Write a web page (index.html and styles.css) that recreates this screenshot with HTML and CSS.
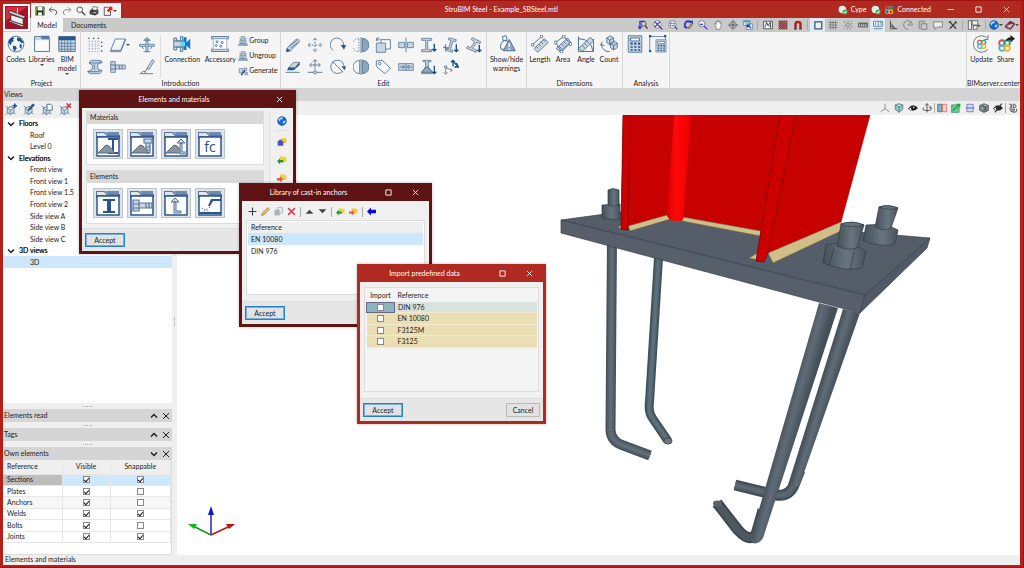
FILE: index.html
```html
<!DOCTYPE html>
<html lang="en">
<head>
<meta charset="utf-8">
<title>StruBIM Steel - Example_SBSteel.mtl</title>
<link rel="stylesheet" href="styles.css">
</head>
<body>
<svg class="defs" aria-hidden="true">
  <defs>
    <symbol id="save" viewBox="0 0 16 16"><path class="ink" d="M1 1h14v14H1z"/><path fill="#efe" d="M4 1h8v6H4zM5 10h6v5H5z"/><path fill="#6b9a28" d="M1 1h2v14H1zM13 2h2v13h-2z"/></symbol>
    <symbol id="undo" viewBox="0 0 16 16"><path class="k" d="M6 2L2 6l4 4M2 6h8q5 1 4 6l-3 2"/></symbol>
    <symbol id="redo" viewBox="0 0 16 16"><path class="g" d="M10 2l4 4-4 4M14 6H6q-5 1-4 6l3 2"/></symbol>
    <symbol id="search" viewBox="0 0 16 16"><circle class="k" cx="6" cy="6" r="4.5"/><path class="k w2" d="M9.500 9.500L15 15"/></symbol>
    <symbol id="print" viewBox="0 0 16 16"><path fill="#444" d="M1 8l4-4 10 2v6l-5 3-9-2z"/><path fill="#fff" stroke="#333" d="M5 6l2-5 7 1-2 5zM3 10l7 2 3-2"/></symbol>
    <symbol id="export" viewBox="0 0 16 16"><path class="k" d="M8 2H2v13h10V8"/><path fill="#f01818" d="M8 1h7v7l-2-2-4 4-3-3 4-4z"/></symbol>
    <symbol id="globe" viewBox="0 0 24 24"><circle cx="12" cy="12" r="10.500" fill="#f2f7fb" stroke="#28588b"/><path fill="#205389" d="M3 6l4-3 3 1-2 2 1 2-3 2-1 4-3-4zM14 3l4 1 4 6-3 1-2-3-2 1-2-3zM8 14l4 1 1 3-3 4-2-4zM17 12l3 1-1 5-2-1z"/></symbol>
    <symbol id="folder" viewBox="0 0 24 24"><path class="lb" d="M2 2h8l2 3h10v17H2z"/><path class="bf" d="M10 1h12v4H12z"/><path class="wf" d="M3 7h18v14H3z"/></symbol>
    <symbol id="tablegrid" viewBox="0 0 24 24"><path class="lb" d="M1 2h22v20H1z"/><path class="df" d="M1 2h22v5H1z"/><path class="b thin" d="M1 11h22M1 15h22M1 19h22M5 7v15M9 7v15M13 7v15M17 7v15"/></symbol>
    <symbol id="dots" viewBox="0 0 24 24"><path fill="none" stroke="#8ba0b6" stroke-dasharray="2 2" d="M3 7h15M3 12h15M3 17h15M3 22h15M3 5v17M8 5v17M13 5v17M18 5v17"/><path class="df" d="M2 1h2v2H2zM9 1h2v2H9zM16 1h2v2h-2zM21 7h2v2h-2zM21 13h2v2h-2zM21 20h2v2h-2z"/></symbol>
    <symbol id="plane" viewBox="0 0 24 24"><path class="b wf" d="M8 3h15l-7 17H1zM1 20v2h15l7-17V3"/></symbol>
    <symbol id="anchor" viewBox="0 0 24 24"><path class="b lb" d="M1 11h22v3H1z"/><path class="lb" d="M10.500 4h3v18h-3zM7 5l5-4 5 4z"/><path class="b" d="M4 14l3 4M20 14l-3 4M7 22h10"/></symbol>
    <symbol id="beam" viewBox="0 0 24 24"><path class="lb" d="M6 2h14l3 3-7 3v7l7 3-4 4H4l-3-3 7-4V9L3 6z"/><path class="b" d="M3 6h13l6-2M1 19h15l6-2M11 8v8"/></symbol>
    <symbol id="bolt" viewBox="0 0 24 24"><path class="lb" d="M1 4h7v16H1zM8 9h15v6H8z"/><path class="b" d="M1 9h7M1 15h7M14 9v6M18 9v6"/></symbol>
    <symbol id="weld" viewBox="0 0 24 24"><path class="lb" d="M12 14l8-13 3 2-8 13z"/><path class="b" d="M12 14l-3 6M1 22h20M3 21q5-5 7 0"/></symbol>
    <symbol id="connection" viewBox="0 0 24 24"><path class="lb" d="M1 4h4v4h5V2h3v20h-3v-6H5v4H1z"/><path fill="#1478ca" d="M14 3h4v7l5-5v14l-5-5v6h-4z"/><path fill="#5be0ed" d="M10 9h6v6h-6z"/><path class="b" d="M1 8h13M1 16h13"/></symbol>
    <symbol id="accessory" viewBox="0 0 24 24"><path class="lb" d="M0 2h24v3H0zM0 19h24v3H0z"/><path class="wf" stroke="#8ca1b7" d="M3 5h18v14H3z"/><g class="b"><circle cx="8" cy="9" r="1.300"/><circle cx="15" cy="10" r="1.300"/><circle cx="7" cy="14" r="1.300"/><circle cx="13" cy="15" r="1.300"/></g></symbol>
    <symbol id="group" viewBox="0 0 16 16"><path class="b thin lb" d="M5 1h6v4H5zM3 7h10v5H3zM1 13h4v2H1zM6 13h4v2H6zM11 13h4v2h-4z"/><path class="b thin" d="M2 3l3 4M14 3l-3 4M6 8v4M9 8v4"/></symbol>
    <symbol id="generate" viewBox="0 0 16 16"><path class="b thin lb" d="M2 4h6v7H2zM10 3h4v4h-4zM11 10h4v4h-4z"/><path class="df" d="M4 14l6-8 2 2-6 7z"/></symbol>
    <symbol id="pencil" viewBox="0 0 24 24"><path class="lb" d="M3 17L17 3q4 0 5 4L8 21l-6 1z"/><path class="b" d="M6 14L18 5M8 17L20 8M3 17l5 4"/><path class="df" d="M2 22l1-5 4 4z"/></symbol>
    <symbol id="eraser" viewBox="0 0 24 24"><path class="lb" d="M5 13l8-8h9l-7 8z"/><path class="df" d="M5 13h10l-2 4H3zM15 13l7-8v4l-9 8z"/><path class="b" d="M1 20h21"/></symbol>
    <symbol id="move" viewBox="0 0 24 24"><path class="b" stroke-dasharray="3 2" d="M12 2v20M2 12h20"/><path class="b" d="M9 5l3-3 3 3M9 19l3 3 3-3M5 9l-3 3 3 3M19 9l3 3-3 3"/></symbol>
    <symbol id="moveline" viewBox="0 0 24 24"><path class="b" d="M12 1v15M5 9h14M9 4l3-3 3 3M7 6L4 9l3 3M17 6l3 3-3 3M1 20h22"/><circle class="lb" cx="12" cy="20" r="2.500"/></symbol>
    <symbol id="rotate" viewBox="0 0 24 24"><path class="b" d="M5 20A10 10 0 1 1 20 14"/><path class="df" d="M16 12h8l-3 7z"/></symbol>
    <symbol id="rotateline" viewBox="0 0 24 24"><path class="b" d="M21 10A10 10 0 1 0 18 19M4 4l16 16"/><path class="df" d="M17 11h7l-2 6z"/></symbol>
    <symbol id="mirror" viewBox="0 0 24 24"><path class="b" d="M9 2A10 10 0 0 0 9 22z" stroke-dasharray="2 2"/><path class="mid-blue" d="M14 2a10 10 0 0 1 0 20z"/><path class="b" d="M12 0v24"/></symbol>
    <symbol id="symmetry" viewBox="0 0 24 24"><path class="b" d="M10 2A10 10 0 0 0 10 22z"/><path class="mid-blue" d="M14 2a10 10 0 0 1 0 20z"/><path class="b" d="M12 0v24"/></symbol>
    <symbol id="copy" viewBox="0 0 24 24"><path class="b wf" d="M9 4h14v14H9z"/><path class="lb" d="M2 9h14v14H2z"/><path class="b" d="M2 6V3h6M5 0L2 3l3 3"/></symbol>
    <symbol id="tag" viewBox="0 0 24 24"><path class="b wf" d="M2 3l9-1 12 12-8 8L2 11z"/><circle class="b" cx="7" cy="7" r="2"/></symbol>
    <symbol id="split" viewBox="0 0 24 24"><path class="lb" d="M1 8h9v8H1zM14 8h9v8h-9z"/><path class="b" d="M12 1v22"/></symbol>
    <symbol id="join" viewBox="0 0 24 24"><path class="lb" d="M1 7h22v10H1z"/><path class="b" d="M12 7v10M3 12h7M7 9l3 3-3 3M21 12h-7M17 9l-3 3 3 3"/></symbol>
    <symbol id="column" viewBox="0 0 24 24"><path class="lb" d="M1 2h15v3h-6v14h6v3H1v-3h6V5H1z"/><path class="db" d="M20 10v11M17 18l3 3 3-3"/></symbol>
    <symbol id="columnrot" viewBox="0 0 24 24"><path class="lb" d="M9 1l11 3-1 3-4-1-4 13 4 1-1 3-9-3 1-3 2 1 4-13-4-1z"/><path class="b" d="M4 11v11M0 16h8M2 13l4 6"/><path class="db" d="M20 11v11M17 19l3 3 3-3"/></symbol>
    <symbol id="columntilt" viewBox="0 0 24 24"><path class="lb" d="M9 1l13 6-1 3-5-2-6 9 6 3-1 3L1 17l1-3 5 2 6-9-5-3z"/><path class="db" d="M20 12v10M17 19l3 3 3-3"/></symbol>
    <symbol id="footing" viewBox="0 0 24 24"><path class="lb" d="M3 2h12v2h-4v8l6 8v2H1v-2l6-8V4H3z"/><path class="mid-blue" d="M7 12h4l6 8H1z"/><path class="db" d="M20 10v12M17 19l3 3 3-3"/></symbol>
    <symbol id="nodes" viewBox="0 0 24 24"><path class="g" d="M4 22v-9l9 4M1 20l3 3 3-3M11 14l3 3-3 2"/><path class="db" d="M15 11V3l7 8M12 5l3-3 3 3M20 6l3 6h-6"/><circle class="lb" cx="4" cy="12" r="2"/></symbol>
    <symbol id="warnings" viewBox="0 0 24 24"><path class="b wf" d="M5 10q-3 4-1 9h6l4-7q0-5-5-5zM6 2l5-1 1 6-5 1z"/><path class="mid-blue" d="M7 21l8-15 8 15z"/><path stroke="#fff" stroke-width="2" d="M15 11v5M15 18v2"/></symbol>
    <symbol id="length" viewBox="0 0 24 24"><path class="lb" d="M4 18L18 5l5 5L9 23z"/><path class="b" d="M2 13L14 2M7 15l3 3M10 12l3 3M13 9l3 3M16 6l3 3"/><circle class="b wf" cx="2" cy="13" r="1.800"/><circle class="b wf" cx="14" cy="2" r="1.800"/></symbol>
    <symbol id="area" viewBox="0 0 24 24"><path class="lb" d="M3 18L18 4l4 5L8 22z"/><path class="b" d="M2 10L13 2l9 9L10 22zM7 15l3 3M10 12l3 3M13 9l3 3M16 6l3 3"/><circle class="b wf" cx="2" cy="10" r="2"/><circle class="b wf" cx="13" cy="2" r="2"/><circle class="b wf" cx="22" cy="12" r="2"/><circle class="b wf" cx="10" cy="22" r="2"/></symbol>
    <symbol id="angle" viewBox="0 0 24 24"><path class="b" d="M2 2v20h20V5M2 5q17 0 19 16"/><path class="lb" d="M2 18L18 3l4 5L7 22z"/><path class="b" d="M7 14l3 3M10 11l3 3M13 8l3 3"/></symbol>
    <symbol id="count" viewBox="0 0 24 24"><path class="lb" d="M9 4l5-3 4 3v6l-5 3-4-3zM14 11l5-3 4 3v6l-5 3-4-3z"/><path class="b" d="M1 12q4 12 12 10M3 9l-2 4 5 1M9 4l4 3 5-3M13 7v6M14 11l4 3 5-3M18 14v6"/></symbol>
    <symbol id="calc" viewBox="0 0 24 24"><path class="lb" d="M3 1h18v22H3z"/><path class="b wf" d="M6 4h12v4H6z"/><path class="df" d="M6 10h3v3H6zM11 10h3v3h-3zM16 10h3v3h-3zM6 15h3v2H6zM11 15h3v2h-3zM16 15h3v2h-3zM6 19h3v2H6zM11 19h3v2h-3zM16 19h3v2h-3z"/></symbol>
    <symbol id="bim" viewBox="0 0 24 24"><g fill="none" stroke-width="3"><circle cx="8" cy="8" r="4.500" stroke="#ef493c"/><circle cx="16" cy="8" r="4.500" stroke="#22a98d"/><circle cx="8" cy="16" r="4.500" stroke="#3bb8ed"/><circle cx="16" cy="16" r="4.500" stroke="#edb62b"/></g></symbol>
    <symbol id="update" viewBox="0 0 24 24"><use href="#bim" x="4" y="5" width="15" height="15"/><path class="g" d="M20 19A11 11 0 1 1 19 4M20 0v6h-5"/></symbol>
    <symbol id="share" viewBox="0 0 24 24"><use href="#bim" x="0" y="4" width="20" height="20"/><path class="ink" d="M12 8q1-5 6-5V0l6 5-6 5V7q-4 0-6 1z"/></symbol>
    <symbol id="zoomback" viewBox="0 0 16 16"><circle class="k" cx="9" cy="6" r="4"/><path class="k w2" d="M12 9l3 5"/><path fill="none" stroke="#2838d0" stroke-width="2" d="M11 2H3v11M0 10l3 4 3-4"/></symbol>
    <symbol id="zoomall" viewBox="0 0 16 16"><circle fill="#fff" stroke="#555" cx="7" cy="7" r="6"/><path fill="none" stroke="#3032c0" stroke-width="2" d="M3 3l8 8M11 3l-8 8M11 11l4 4"/></symbol>
    <symbol id="zoomwin" viewBox="0 0 16 16"><circle fill="#fff" stroke="#555" cx="7" cy="7" r="6"/><path fill="none" stroke="#5058c0" stroke-width="2" stroke-dasharray="2 1" d="M4 5h6v4H4z"/><path class="k w2" d="M11 11l4 4"/></symbol>
    <symbol id="redraw" viewBox="0 0 16 16"><path fill="none" stroke="#2b36cf" stroke-width="3" d="M13 4Q6-1 3 6v5l4 2"/><path fill="#2838d0" d="M10 1h6v6z"/><path fill="#dd9827" stroke="#555" d="M8 13l5-7 2 2-5 6z"/></symbol>
    <symbol id="zoomout" viewBox="0 0 16 16"><circle fill="#edf0ff" stroke="#555" cx="6" cy="6" r="5"/><path fill="none" stroke="#4040d0" stroke-width="2" d="M3 7h5M10 10l5 5"/></symbol>
    <symbol id="hand" viewBox="0 0 16 16"><path class="g wf" d="M4 9L2 6l2-1 1 2V2l2 1V1h2v2l2-1v3l2-1v7l-3 4H6z"/></symbol>
    <symbol id="orbit" viewBox="0 0 16 16"><path class="k" d="M6 3l2-2 2 2M6 13l2 2 2-2M3 6L1 8l2 2M13 6l2 2-2 2M8 4v8M4 8h8"/><circle class="g" cx="8" cy="8" r="5"/></symbol>
    <symbol id="windows" viewBox="0 0 16 16"><path fill="#def5f5" stroke="#41709a" d="M1 1h10v8H1zM5 6h10v9H5z"/><path fill="#49aab5" d="M1 1h10v3H1z"/><path fill="none" stroke="#2530bd" stroke-width="2" d="M7 8l6 5M7 12V8h4"/></symbol>
    <symbol id="raster" viewBox="0 0 16 16"><path class="k wf" d="M1 2h14v12H1z"/><path class="k" d="M3 12l3-8 2 5 4-6v9M4 4l9 8"/></symbol>
    <symbol id="redgrid" viewBox="0 0 16 16"><path fill="#812b31" d="M1 1h14v14H1z"/><path stroke="#ddb9b9" stroke-dasharray="2 2" d="M1 4h14M1 8h14M1 12h14M4 1v14M8 1v14M12 1v14"/></symbol>
    <symbol id="magnet" viewBox="0 0 16 16"><path fill="none" stroke="#b5201c" stroke-width="4" d="M4 13V7q0-4 4-4t4 4v6"/><path stroke="#222" stroke-width="2" d="M2 14h4M10 14h4"/></symbol>
    <symbol id="square" viewBox="0 0 16 16"><path fill="#eee" stroke="#3d566d" stroke-width="2" d="M3 3h11v11H3z"/></symbol>
    <symbol id="hash" viewBox="0 0 16 16"><path class="g" d="M4 1v14M8 1v14M12 1v14M1 4h14M1 8h14M1 12h14"/></symbol>
    <symbol id="snap" viewBox="0 0 16 16"><path class="g" stroke-dasharray="2 3" d="M2 2h12v12H2z"/><circle class="g" cx="8" cy="8" r="3"/></symbol>
    <symbol id="ruler" viewBox="0 0 16 16"><path class="k" d="M1 5h14v6H1zM4 5v4M7 5v4M10 5v4M13 5v4"/></symbol>
    <symbol id="coords" viewBox="0 0 16 16"><path class="b wf" d="M1 2h14v8H1z"/><path class="b" d="M4 4v4M7 4h2v4H7M11 4h2v4M1 14h14"/></symbol>
    <symbol id="perp" viewBox="0 0 16 16"><path class="k" d="M4 1v13h11M4 5l8 9M4 10h4v4"/></symbol>
    <symbol id="polar" viewBox="0 0 16 16"><path class="g" d="M8 8h7A7 7 0 1 0 8 15M8 8l5-5"/></symbol>
    <symbol id="pages" viewBox="0 0 16 16"><path class="g" d="M2 14V2h8v3M5 6h9v9H5z"/></symbol>
    <symbol id="comment" viewBox="0 0 16 16"><path fill="#eee" stroke="#555" d="M1 3h14v8H7l-4 4v-4H1z"/></symbol>
    <symbol id="tools" viewBox="0 0 16 16"><path class="k w2" d="M3 3l10 11M13 3L3 14M1 4l4-2M11 2l3 3"/></symbol>
    <symbol id="layout" viewBox="0 0 20 16"><path fill="#eee" stroke="#333" d="M1 1h5v14H1zM7 1h9v7H7zM9 9h6v6H9z"/><path class="ink" d="M16 8h4l-2 3z"/></symbol>
    <symbol id="world" viewBox="0 0 16 16"><circle cx="8" cy="8" r="7" fill="#176bce" stroke="#0b3d97"/><path fill="#a6e5ff" d="M2 6q2-5 8-4L8 5 5 6l-1 3zM10 8l4-1-2 5-3-1z"/></symbol>
    <symbol id="book" viewBox="0 0 16 16"><path fill="#88273a" stroke="#441320" d="M1 9l7-7 7 3-6 8zM1 9v3l8 3 6-8V5"/><path stroke="#f2dddd" d="M3 11l6 2"/></symbol>
    <symbol id="axes" viewBox="0 0 16 16"><path class="g" d="M8 1v8L1 14M8 9l7 5"/></symbol>
    <symbol id="cube" viewBox="0 0 16 16"><path fill="#8dcbcb" stroke="#3e5966" d="M2 3l6-2 6 2v7l-6 5-6-5zM2 3l6 3 6-3M8 6v9"/></symbol>
    <symbol id="eye" viewBox="0 0 16 16"><path class="ink" d="M0 9q8-10 16-1-7 8-16 1z"/><path fill="#fff" d="M2 9q1-2 3-2-1 2 1 4-3 0-4-2zM8 6h2v2H8z"/></symbol>
    <symbol id="eyeoff" viewBox="0 0 16 16"><path class="ink" d="M0 9q8-10 16-1-7 8-16 1z"/><path fill="#fff" d="M2 9q1-2 3-2-1 2 1 4-3 0-4-2z"/><path class="k w2" d="M3 15L14 1"/></symbol>
    <symbol id="orbitaxis" viewBox="0 0 16 16"><path class="k" d="M8 1v14M5 4l3-3 3 3M3 7q-5 5 5 5t5-5M11 7l3-1 1 3"/></symbol>
    <symbol id="section" viewBox="0 0 16 16"><path fill="#79b5bc" stroke="#33505c" d="M1 2h7v12H1z"/><path fill="#ffd6d6" stroke="#dd3434" d="M9 2h6v12H9z"/></symbol>
    <symbol id="greenplane" viewBox="0 0 16 16"><path fill="#6bc995" stroke="#28775f" d="M1 3h12v12H1z"/><path fill="none" stroke="#15ac35" stroke-width="2" d="M3 12L14 2M9 2h5v5"/></symbol>
    <symbol id="slab" viewBox="0 0 16 16"><path fill="#dadcf4" stroke="#4e579a" d="M3 2h10v12H3z"/><path fill="#7179d0" d="M1 7h14v2H1z"/></symbol>
    <symbol id="solid" viewBox="0 0 16 16"><path fill="#8b9c9c" stroke="#303b3e" d="M1 4l7-3 7 3v8l-7 3-7-3zM1 4l7 3 7-3M8 7v8M4 3l7 3v8M1 8l7 3 7-3"/></symbol>
    <symbol id="threed" viewBox="0 0 16 16"><path class="k" d="M2 2h4v6H2M3 5h3M9 2h2q4 3 0 6H9zM3 10q2 5 7 5t4-6M4 10h6v3H4"/></symbol>
    <symbol id="view" viewBox="0 0 16 16"><path class="b thin lb" d="M3 6l5-2 4 2v6l-5 3-4-3zM3 6l4 3 5-3M7 9v5"/><path class="b thin" d="M1 3l3 3M1 15l3-3M14 14l-3-2"/></symbol>
    <symbol id="viewadd" viewBox="0 0 16 16"><use href="#view"/><path class="db" d="M13 0v6M10 3h6"/></symbol>
    <symbol id="viewedit" viewBox="0 0 16 16"><use href="#view"/><path class="df" d="M6 10l1-3 6-7 3 2-7 7z"/></symbol>
    <symbol id="viewcopy" viewBox="0 0 16 16"><use href="#view"/><path class="b wf" d="M8 1h5l2 2v6H8z"/></symbol>
    <symbol id="viewdel" viewBox="0 0 16 16"><use href="#view"/><path fill="none" stroke="#ee2828" stroke-width="2" d="M10 0l6 6M16 0l-6 6"/></symbol>
    <symbol id="tile" viewBox="0 0 28 28"><path class="bf" d="M2 2h9l3 3h12v4H2z"/><path fill="#7089b0" d="M12 2h13v3H14z"/><path fill="#dfe6ee" d="M3 3h7l3 3H3z"/><path fill="#fff" stroke="#2d578d" stroke-width="1.500" d="M3 7h22v19H3z"/></symbol>
    <symbol id="pile" viewBox="0 0 28 28"><path fill="#87939f" stroke="#58697b" d="M4 23l8-8 3 1 6 7z"/></symbol>
    <symbol id="t-steel" viewBox="0 0 28 28"><use href="#tile"/><path class="df" d="M14 8h10v2h-4v12h4v2H14v-2h4V10h-4z"/><use href="#pile"/></symbol>
    <symbol id="t-boltmat" viewBox="0 0 28 28"><use href="#tile"/><path class="b lb" d="M16 9h8v4h-8zM18 13h4v10h-4zM18 17h4M18 20h4"/><use href="#pile"/></symbol>
    <symbol id="t-ancmat" viewBox="0 0 28 28"><use href="#tile"/><use href="#pile"/><path class="b lb thin" d="M15 13l4-4 4 4zM18 13h2v9h5v2h-7z"/></symbol>
    <symbol id="t-beam" viewBox="0 0 28 28"><use href="#tile"/><path class="df" d="M9 10h12v2h-4v10h4v2H9v-2h4V12H9z"/></symbol>
    <symbol id="t-bolt" viewBox="0 0 28 28"><use href="#tile"/><path class="b lb" d="M5 11h6v11H5zM11 14h13v5H11zM5 15h6M5 19h6M18 14v5M21 14v5"/></symbol>
    <symbol id="t-anchor" viewBox="0 0 28 28"><use href="#tile"/><path class="b lb thin" d="M9 13l4-4 4 4zM12 13h2v9h5v2h-7z"/></symbol>
    <symbol id="t-weld" viewBox="0 0 28 28"><use href="#tile"/><path class="df" d="M12 17l3-7h10v2h-8l-3 5zM3 23h22v2H3z"/><path fill="none" stroke="#304968" stroke-dasharray="1 2" d="M6 19l8 4M8 22l8-5"/></symbol>
    <symbol id="fblue" viewBox="0 0 16 16"><path fill="#edc633" d="M6 2h9v8H6z"/><path fill="#4850c7" d="M1 7l4-3 5 3v7H1z"/></symbol>
    <symbol id="fgreen" viewBox="0 0 16 16"><path fill="#f2d238" d="M5 2h5l1 1h4v8H5z"/><path fill="#2e9430" d="M0 10l5-5v3h5v4H5v3z"/></symbol>
    <symbol id="fred" viewBox="0 0 16 16"><path fill="#f2cd45" d="M5 2h5l1 1h4v8H5z"/><path fill="#ef564b" d="M10 10L5 5v3H0v4h5v3z"/></symbol>
    <symbol id="plus" viewBox="0 0 16 16"><path class="k w2" d="M8 1v14M1 8h14"/></symbol>
    <symbol id="edit" viewBox="0 0 16 16"><path fill="#e8c24b" stroke="#71623a" d="M1 15l1-4L12 1l3 3L5 14z"/></symbol>
    <symbol id="dup" viewBox="0 0 16 16"><path fill="#e8ebec" stroke="#909698" d="M6 1h9v10H6z"/><path fill="#aab0b3" d="M1 5h9v10H1z"/></symbol>
    <symbol id="redx" viewBox="0 0 16 16"><path fill="none" stroke="#df4651" stroke-width="3" d="M2 2l12 12M14 2L2 14"/></symbol>
    <symbol id="up" viewBox="0 0 16 16"><path fill="#444" d="M1 12l7-7 7 7z"/></symbol>
    <symbol id="down" viewBox="0 0 16 16"><path fill="#444" d="M1 4l7 7 7-7z"/></symbol>
    <symbol id="left" viewBox="0 0 16 16"><path fill="#0909e1" d="M0 8l7-7v4h9v6H7v4z"/></symbol>
    <symbol id="x" viewBox="0 0 16 16"><path class="cur" d="M2 2l12 12M14 2L2 14"/></symbol>
    <symbol id="max" viewBox="0 0 16 16"><path class="cur" d="M2 2h12v12H2z"/></symbol>
    <symbol id="min" viewBox="0 0 16 16"><path class="cur" d="M1 8h14"/></symbol>
    <symbol id="chevd" viewBox="0 0 16 16"><path class="cur chev" d="M2 5l6 6 6-6"/></symbol>
    <symbol id="chevu" viewBox="0 0 16 16"><path class="cur chev" d="M2 11l6-6 6 6"/></symbol>
    <symbol id="user" viewBox="0 0 16 16"><circle cx="7" cy="7" r="6" fill="#e5f0e4"/><circle cx="11" cy="11" r="4" fill="#45b45a"/><path fill="none" stroke="#fff" stroke-width="1.500" d="M9 11l2 2 3-4"/></symbol>
    <linearGradient id="stripe"><stop stop-color="#d90000"/><stop offset=".35" stop-color="#ff0808"/><stop offset="1" stop-color="#ef0000"/></linearGradient>
    <linearGradient id="rod"><stop stop-color="#454f58"/><stop offset=".55" stop-color="#687580"/><stop offset="1" stop-color="#49535c"/></linearGradient>
    <linearGradient id="leg" gradientUnits="userSpaceOnUse" x1="784" y1="415" x2="802" y2="420"><stop stop-color="#434e57"/><stop offset=".45" stop-color="#5f6c77"/><stop offset="1" stop-color="#444f58"/></linearGradient>
    <linearGradient id="leg2" gradientUnits="userSpaceOnUse" x1="817" y1="395" x2="830" y2="399"><stop stop-color="#46515a"/><stop offset=".45" stop-color="#606d78"/><stop offset="1" stop-color="#48535c"/></linearGradient>
  </defs>
</svg>

<div class="app">
  <header class="titlebar">
    <button class="logo" aria-label="StruBIM Steel"><svg viewBox="0 0 24 24"><path fill="#a90f25" d="M0 0h24v24H0z"/><path fill="#d52c40" d="M1 1h22L1 15z"/><path fill="#eee" stroke="#49262b" d="M6 9l13 4v7L6 16z"/><path fill="#ccc" stroke="#443333" d="M3 7l3-2 16 6-3 2zM3 16l2-1 15 5-2 2z"/><path stroke="#eee" d="M13 8V2"/></svg></button>
    <div class="quick">
      <button aria-label="Save"><svg><use href="#save"/></svg></button><button aria-label="Undo"><svg><use href="#undo"/></svg></button><button aria-label="Redo"><svg><use href="#redo"/></svg></button><button aria-label="Search"><svg><use href="#search"/></svg></button><button aria-label="Print"><svg><use href="#print"/></svg></button><button class="arrow" aria-label="Export"><svg><use href="#export"/></svg></button>
    </div>
    <h1>StruBIM Steel - Example_SBSteel.mtl</h1>
    <div class="account"><svg><use href="#user"/></svg><span>Cype</span><svg><use href="#user"/></svg><svg><use href="#bim"/></svg><span>Connected</span></div>
    <div class="winbtns"><button aria-label="Minimise"><svg><use href="#min"/></svg></button><button aria-label="Maximise"><svg><use href="#max"/></svg></button><button aria-label="Close"><svg><use href="#x"/></svg></button></div>
  </header>
  <nav class="tabs">
    <button class="tab active">Model</button><button class="tab">Documents</button>
    <div class="tools">
      <button aria-label="Previous view"><svg><use href="#zoomback"/></svg></button><button aria-label="Zoom all"><svg><use href="#zoomall"/></svg></button><button aria-label="Zoom window"><svg><use href="#zoomwin"/></svg></button><button aria-label="Redraw"><svg><use href="#redraw"/></svg></button><button aria-label="Zoom out"><svg><use href="#zoomout"/></svg></button><button aria-label="Pan"><svg><use href="#hand"/></svg></button><button aria-label="Orbit"><svg><use href="#orbit"/></svg></button><button aria-label="Windows"><svg><use href="#windows"/></svg></button><i class="sep"></i>
      <button aria-label="Templates"><svg><use href="#raster"/></svg></button><button aria-label="Template layers"><svg><use href="#redgrid"/></svg></button><button aria-label="Template snaps"><svg><use href="#magnet"/></svg></button><i class="sep"></i>
      <button class="on" aria-label="Frame"><svg><use href="#square"/></svg></button><button aria-label="Grid"><svg><use href="#hash"/></svg></button><button aria-label="Snap"><svg><use href="#snap"/></svg></button><button aria-label="Ruler"><svg><use href="#ruler"/></svg></button><button class="on" aria-label="Coordinates"><svg><use href="#coords"/></svg></button><button aria-label="Orthogonal"><svg><use href="#perp"/></svg></button><button aria-label="Polar"><svg><use href="#polar"/></svg></button><button aria-label="Pages"><svg><use href="#pages"/></svg></button><button aria-label="Comment"><svg><use href="#comment"/></svg></button><button aria-label="Settings"><svg><use href="#tools"/></svg></button><i class="sep"></i>
      <button class="wide" aria-label="Layout"><svg><use href="#layout"/></svg></button><i class="sep"></i><button class="mid arrow" aria-label="Language"><svg><use href="#world"/></svg></button><button class="mid arrow" aria-label="Help"><svg><use href="#book"/></svg></button>
    </div>
  </nav>

  <section class="ribbon" aria-label="Model">
    <div class="rgroup project"><div class="rbody">
      <button class="big"><svg><use href="#globe"/></svg>Codes</button><button class="big drop"><svg><use href="#folder"/></svg>Libraries</button><button class="big drop"><svg><use href="#tablegrid"/></svg>BIM<br>model</button>
    </div><h2>Project</h2></div>
    <div class="rgroup intro"><div class="rbody">
      <div class="grid3"><button aria-label="Grid"><svg><use href="#dots"/></svg></button><button class="side" aria-label="Plane"><svg><use href="#plane"/></svg></button><button aria-label="Anchor"><svg><use href="#anchor"/></svg></button><button aria-label="Section"><svg><use href="#beam"/></svg></button><button class="start" aria-label="Bolt"><svg><use href="#bolt"/></svg></button><button aria-label="Weld"><svg><use href="#weld"/></svg></button></div>
      <button class="big w40"><svg><use href="#connection"/></svg>Connection</button><button class="big w36"><svg><use href="#accessory"/></svg>Accessory</button>
      <div class="stack"><button><svg><use href="#group"/></svg>Group</button><button><svg><use href="#group"/></svg>Ungroup</button><button><svg><use href="#generate"/></svg>Generate</button></div>
    </div><h2>Introduction</h2></div>
    <div class="rgroup edit"><div class="rbody"><div class="grid9">
      <button aria-label="Edit"><svg><use href="#pencil"/></svg></button><button aria-label="Move"><svg><use href="#move"/></svg></button><button aria-label="Rotate"><svg><use href="#rotate"/></svg></button><button aria-label="Mirror"><svg><use href="#mirror"/></svg></button><button aria-label="Copy"><svg><use href="#copy"/></svg></button><button aria-label="Divide"><svg><use href="#split"/></svg></button><button aria-label="Place section"><svg><use href="#column"/></svg></button><button aria-label="Adjust section"><svg><use href="#columnrot"/></svg></button><button aria-label="Tilt section"><svg><use href="#columntilt"/></svg></button>
      <button aria-label="Delete"><svg><use href="#eraser"/></svg></button><button aria-label="Move line"><svg><use href="#moveline"/></svg></button><button aria-label="Rotate line"><svg><use href="#rotateline"/></svg></button><button aria-label="Symmetry"><svg><use href="#symmetry"/></svg></button><button aria-label="Tag"><svg><use href="#tag"/></svg></button><button aria-label="Join"><svg><use href="#join"/></svg></button><button aria-label="Place footing"><svg><use href="#footing"/></svg></button><button aria-label="Nodes"><svg><use href="#nodes"/></svg></button>
    </div></div><h2>Edit</h2></div>
    <div class="rgroup warn"><div class="rbody"><button class="big"><svg><use href="#warnings"/></svg>Show/hide<br>warnings</button></div></div>
    <div class="rgroup dims"><div class="rbody"><button class="big"><svg><use href="#length"/></svg>Length</button><button class="big"><svg><use href="#area"/></svg>Area</button><button class="big"><svg><use href="#angle"/></svg>Angle</button><button class="big"><svg><use href="#count"/></svg>Count</button></div><h2>Dimensions</h2></div>
    <div class="rgroup analysis"><div class="rbody"><button class="big" aria-label="Calculate"><svg><use href="#calc"/></svg></button><button class="big" aria-label="Calculate selection"><svg viewBox="0 0 24 24"><path class="b thin" d="M1 22V2h21v5"/><path class="df" d="M0 0h3v3H0zM20 0h3v3h-3zM0 20h3v3H0z"/><use href="#calc" x="7" y="5" width="18" height="19"/></svg></button></div><h2>Analysis</h2></div>
    <div class="rgroup center"><div class="rbody"><button class="big"><svg><use href="#update"/></svg>Update</button><button class="big"><svg><use href="#share"/></svg>Share</button></div><h2>BIMserver.center</h2></div>
  </section>

  <main class="work">
    <aside class="side-panel">
      <h2 class="bar">Views</h2>
      <div class="viewtools"><button aria-label="New view"><svg><use href="#viewadd"/></svg></button><button aria-label="Edit view"><svg><use href="#viewedit"/></svg></button><button aria-label="Copy view"><svg><use href="#viewcopy"/></svg></button><button aria-label="Delete view"><svg><use href="#viewdel"/></svg></button></div>
      <div class="treebox"><ul class="tree">
        <li class="branch"><svg><use href="#chevd"/></svg>Floors</li><li>Roof</li><li>Level 0</li>
        <li class="branch"><svg><use href="#chevd"/></svg>Elevations</li><li>Front view</li><li>Front view 1</li><li>Front view 1.5</li><li>Front view 2</li><li>Side view A</li><li>Side view B</li><li>Side view C</li>
        <li class="branch"><svg><use href="#chevd"/></svg>3D views</li><li class="sel">3D</li>
      </ul></div>
      <div class="grip"></div><h2 class="bar">Elements read<span><button aria-label="Expand"><svg><use href="#chevu"/></svg></button><button aria-label="Close"><svg><use href="#x"/></svg></button></span></h2>
      <div class="grip"></div><h2 class="bar">Tags<span><button aria-label="Expand"><svg><use href="#chevu"/></svg></button><button aria-label="Close"><svg><use href="#x"/></svg></button></span></h2>
      <div class="grip"></div><h2 class="bar">Own elements<span><button aria-label="Collapse"><svg><use href="#chevd"/></svg></button><button aria-label="Close"><svg><use href="#x"/></svg></button></span></h2>
      <div class="own"><table>
        <thead><tr><th>Reference</th><th>Visible</th><th>Snappable</th></tr></thead>
        <tbody>
          <tr class="sel"><td>Sections</td><td><input type="checkbox" aria-label="Sections visible" checked></td><td><input type="checkbox" aria-label="Sections snappable" checked></td></tr>
          <tr><td>Plates</td><td><input type="checkbox" aria-label="Plates visible" checked></td><td><input type="checkbox" aria-label="Plates snappable"></td></tr>
          <tr class="alt"><td>Anchors</td><td><input type="checkbox" aria-label="Anchors visible" checked></td><td><input type="checkbox" aria-label="Anchors snappable"></td></tr>
          <tr><td>Welds</td><td><input type="checkbox" aria-label="Welds visible" checked></td><td><input type="checkbox" aria-label="Welds snappable" checked></td></tr>
          <tr><td>Bolts</td><td><input type="checkbox" aria-label="Bolts visible" checked></td><td><input type="checkbox" aria-label="Bolts snappable"></td></tr>
          <tr><td>Joints</td><td><input type="checkbox" aria-label="Joints visible" checked></td><td><input type="checkbox" aria-label="Joints snappable" checked></td></tr>
        </tbody>
      </table></div>
    </aside>
    <div class="splitter"></div>
    <section class="viewport">
      <div class="band"></div>
      <div class="viewbar"><button aria-label="Axes"><svg><use href="#axes"/></svg></button><button aria-label="Cube"><svg><use href="#cube"/></svg></button><button aria-label="Look"><svg><use href="#eye"/></svg></button><button aria-label="Turn"><svg><use href="#orbitaxis"/></svg></button><i class="sep"></i><button aria-label="Section"><svg><use href="#section"/></svg></button><button aria-label="Work plane"><svg><use href="#greenplane"/></svg></button><button aria-label="Slab"><svg><use href="#slab"/></svg></button><button aria-label="Solid"><svg><use href="#solid"/></svg></button><button aria-label="Visibility"><svg><use href="#eyeoff"/></svg></button><i class="sep"></i><button aria-label="3D options"><svg><use href="#threed"/></svg></button></div>
      <div class="canvas">
        <svg viewBox="177 115 843 440" preserveAspectRatio="xMinYMin slice" role="img" aria-label="3D view of a steel column base plate with anchors">
          <g fill="none" stroke-linejoin="round">
            <g stroke="#46515a" stroke-width="10"><path id="rodA" d="M612 240L610.500 430Q611 441 622 445L650 455.500"/></g><use href="#rodA" stroke="#54606a" stroke-width="7"/><use href="#rodA" stroke="#606d77" stroke-width="3"/>
            <g stroke="#3f5059" stroke-width="9"><path id="rodB" d="M659 250L649.500 402Q648 412 653 419L668 441"/></g><use href="#rodB" stroke="#50626c" stroke-width="6"/><use href="#rodB" stroke="#5d707b" stroke-width="3"/>
            <g stroke="#414c54" stroke-width="11"><path id="rodD" d="M800 470L794 485Q789 497 776 495L735 485"/></g><use href="#rodD" stroke="#525e68" stroke-width="7"/><use href="#rodD" stroke="#5d6a74" stroke-width="3"/>
          </g>
          <ellipse cx="668" cy="441" rx="4" ry="3" fill="#70777e" stroke="#454d54"/>
          <path fill="url(#leg2)" d="M843 309l17 4-61 174-11-2z"/>
          <g fill="none" stroke="#3f494f" stroke-width="11" stroke-linejoin="round"><path id="hook" d="M717 503L738 530Q752 545 757 531L763 510"/></g><use href="#hook" fill="none" stroke="#4d5860" stroke-width="7"/>
          <path fill="url(#leg)" d="M819 303l19 5-75 230q-4 7-11 5l1-13z"/><ellipse cx="717.500" cy="503.500" rx="4.500" ry="3" fill="#596269"/>
          <path fill="#555d69" stroke="#393f48" stroke-width=".7" d="M561 220l59-8 310 26-65 57z"/>
          <path fill="#575f6a" stroke="#393f48" stroke-width=".7" d="M561 220l304 75-5 18-299-80z"/>
          <path fill="#505965" stroke="#393f48" stroke-width=".7" d="M930 238l-65 57-5 18 67-65z"/>
          <path fill="#c70000" d="M623 115h247l-29 107-73 32-141-28-6 3z"/>
          <path fill="#555d69" d="M629 231l43-12 10 1 79 16-4 19-28 5z"/>
          <path fill="#cfbe87" stroke="#665f48" stroke-width=".6" d="M628 226l39-11 4 4-41 12zM683 217l78 14-1 5-78-15zM749 258l8-5v7zM768 253l73-31 2 8-70 33zM618 227l3-2v4z"/>
          <path fill="#cc0000" stroke="#720000" stroke-width=".7" d="M623 114h7l-2 116-7-1zM780 114h16l-28 139-4 9-8-1z"/>
          <path fill="url(#stripe)" d="M674 115h17l-8 105q-7 2-13 0l-3-4z"/>
          <path fill="none" stroke="#930000" stroke-width=".6" d="M841 222l29-107"/>
          <g stroke="#343c43" stroke-width=".7">
            <path fill="url(#rod)" d="M602 205l18-1v15l-4 1-14-2z"/><path fill="url(#rod)" d="M608 190q5-3 11 0v15q-6 3-11 0z"/>
            <path fill="url(#rod)" d="M866 225l19-1 13 6-3 14q-12 4-32-3z"/><path fill="url(#rod)" d="M879 207q9-3 19 1l-7 20q-7 4-16-1z"/>
            <path fill="url(#rod)" d="M826 244l25-1 15 8-4 17q-18 4-39-5z"/><path fill="none" d="M834 248l-5 17M854 252l-4 18"/><path fill="url(#rod)" d="M841 224q11-4 23 1l-7 23q-10 3-20-2z"/>
            <path fill="#65717b" d="M841 224q11-4 23 1-12 4-23-1zM879 207q9-3 19 1-10 3-19-1z"/>
          </g>
          <path stroke="#2024c7" stroke-width="1.500" d="M211 535v-20"/><path fill="#1515c5" d="M211 506l3 9h-6z"/><path stroke="#179323" stroke-width="1.500" d="M211 535l-16-8"/><path fill="#09bb18" d="M188 524l9 0-3 5z"/><path stroke="#b31919" stroke-width="1.500" d="M211 535l17-8"/><path fill="#c90c0c" d="M235 524l-9 0 3 5z"/>
        </svg>
      </div>
    </section>
  </main>
  <footer class="status">Elements and materials</footer>
</div>

<section class="dialog materials" aria-label="Elements and materials">
  <header><h2>Elements and materials</h2><button aria-label="Close"><svg><use href="#x"/></svg></button></header>
  <div class="matbody">
    <div class="matgroups">
      <fieldset><legend>Materials</legend><div class="tiles"><button aria-label="Steel"><svg><use href="#t-steel"/></svg></button><button aria-label="Bolt materials"><svg><use href="#t-boltmat"/></svg></button><button aria-label="Anchor materials"><svg><use href="#t-ancmat"/></svg></button><button aria-label="Concrete"><svg viewBox="0 0 28 28"><use href="#tile"/><text x="14" y="22" text-anchor="middle" class="fc">fc</text></svg></button></div></fieldset>
      <fieldset><legend>Elements</legend><div class="tiles"><button aria-label="Sections"><svg><use href="#t-beam"/></svg></button><button aria-label="Bolts"><svg><use href="#t-bolt"/></svg></button><button aria-label="Anchors"><svg><use href="#t-anchor"/></svg></button><button aria-label="Welds"><svg><use href="#t-weld"/></svg></button></div></fieldset>
    </div>
    <div class="mattools"><button aria-label="Web"><svg><use href="#world"/></svg></button><hr><button aria-label="Library"><svg><use href="#fblue"/></svg></button><button aria-label="Import"><svg><use href="#fgreen"/></svg></button><button aria-label="Export"><svg><use href="#fred"/></svg></button></div>
  </div>
  <footer><button class="btn primary">Accept</button></footer>
</section>

<section class="dialog library" aria-label="Library of cast-in anchors">
  <header><h2>Library of cast-in anchors</h2><button aria-label="Maximise"><svg><use href="#max"/></svg></button><button aria-label="Close"><svg><use href="#x"/></svg></button></header>
  <div class="dbody">
    <div class="listtools"><button aria-label="Add"><svg><use href="#plus"/></svg></button><button aria-label="Edit"><svg><use href="#edit"/></svg></button><button aria-label="Copy"><svg><use href="#dup"/></svg></button><button aria-label="Delete"><svg><use href="#redx"/></svg></button><i class="sep"></i><button aria-label="Up"><svg><use href="#up"/></svg></button><button aria-label="Down"><svg><use href="#down"/></svg></button><i class="sep"></i><button aria-label="Import"><svg><use href="#fgreen"/></svg></button><button aria-label="Export"><svg><use href="#fred"/></svg></button><i class="sep"></i><button aria-label="Import predefined"><svg><use href="#left"/></svg></button></div>
    <div class="list white"><table><thead><tr><th>Reference</th></tr></thead><tbody><tr class="sel"><td>EN 10080</td></tr><tr><td>DIN 976</td></tr></tbody></table></div>
  </div>
  <footer><button class="btn primary">Accept</button></footer>
</section>

<section class="dialog import" aria-label="Import predefined data">
  <header><h2>Import predefined data</h2><button aria-label="Maximise"><svg><use href="#max"/></svg></button><button aria-label="Close"><svg><use href="#x"/></svg></button></header>
  <div class="dbody">
    <div class="list"><table><thead><tr><th>Import</th><th>Reference</th></tr></thead><tbody>
      <tr class="current"><td><input type="checkbox" aria-label="Import DIN 976"></td><td>DIN 976</td></tr><tr><td><input type="checkbox" aria-label="Import EN 10080"></td><td>EN 10080</td></tr><tr><td><input type="checkbox" aria-label="Import F3125M"></td><td>F3125M</td></tr><tr><td><input type="checkbox" aria-label="Import F3125"></td><td>F3125</td></tr></tbody></table></div>
  </div>
  <footer><button class="btn primary">Accept</button><button class="btn">Cancel</button></footer>
</section>
</body>
</html>
```
FILE: styles.css
```css
* { box-sizing: border-box; }
body { margin: 0; font: 7px/9px Lato, "Open Sans", sans-serif; color: #1c1c1c; }
h1, h2, ul, fieldset, legend { margin: 0; padding: 0; font: inherit; border: 0; }
button { font: inherit; color: inherit; background: none; border: 0; padding: 0; display: flex; align-items: center; justify-content: center; }
svg { display: block; flex: none; width: 10px; height: 10px; }
.defs { position: absolute; width: 0; height: 0; }
.ink { fill: #222; }
.k { fill: none; stroke: #3c3c3c; stroke-width: 1.3; }
.g { fill: none; stroke: #707070; stroke-width: 1.2; }
.w2 { stroke-width: 2; }
.b { fill: none; stroke: #4b7297; stroke-width: 1.3; }
.lb { fill: #c9d5e1; stroke: #55769a; stroke-width: 1.2; }
.mid-blue { fill: #8fa5bc; stroke: #44698f; stroke-width: 1.2; }
.thin { stroke-width: 1; }
.wf, .k.wf, .b.wf, .g.wf { fill: #fafcfd; }
.bf { fill: #59769f; }
.df { fill: #28568a; }
.db { fill: none; stroke: #174f87; stroke-width: 2; }
.cur { fill: none; stroke: currentColor; stroke-width: 2; }
.chev { stroke-width: 3; }
.fc { font: 14px "Open Sans", sans-serif; fill: #2d507a; }

.app { height: 100vh; min-height: 568px; display: flex; flex-direction: column; padding: 0 3px 2px; background: #b32019; border: solid #a31212; border-width: 1px 1px 1px 0; }
.titlebar { display: flex; height: 17px; flex: none; color: #fff; background: #b12a22; position: relative; }
.logo { width: 27px; height: 27px; background: #fff; position: absolute; left: 0; top: 3px; z-index: 1; }
.logo svg { width: 23px; height: 23px; }
.quick { margin: 2px 0 0 28px; width: 90px; background: #f5f5f5; display: flex; justify-content: space-around; padding: 0 2px; }
.titlebar h1 { flex: 1; text-align: center; align-self: center; padding-left: 44px; }
.account, .winbtns { display: flex; align-items: center; gap: 3px; }
.account { padding-right: 3px; }
.account span { padding-right: 2px; }
.winbtns { gap: 0; }
.winbtns button { width: 28px; }
.winbtns svg, .dialog header svg { width: 7px; height: 7px; }

.tabs { display: flex; height: 14px; flex: none; background: #c9c9c9; padding-left: 28px; }
.tab { padding: 0 8px; }
.tab.active { background: #f7f7f7; width: 32px; padding: 0; }
.tools { margin-left: auto; display: flex; align-items: center; }
.tools button { width: 15px; height: 14px; }
.tools .on { background: #dcebf5; }
.tools .wide { width: 18px; }
.tools .wide svg { width: 14px; }
.tools .mid { width: 16px; }
.arrow::after, .side::after, .drop::after { content: ""; border: 2px solid transparent; border-top-color: #444; border-bottom: 0; }
.sep { width: 1px; height: 10px; margin: 0 2px; background: #aaa; }

.ribbon { display: flex; height: 56px; flex: none; background: #f5f5f5; }
.rgroup { border-right: 1px solid #d5d5d5; display: flex; flex-direction: column; }
.rgroup h2 { text-align: center; margin-top: auto; white-space: nowrap; }
.rbody { display: flex; justify-content: center; padding-top: 3px; }
.big { flex-direction: column; justify-content: flex-start; min-width: 23px; line-height: 9px; }
.big svg { width: 18px; height: 18px; margin-bottom: 2px; }
.project { width: 78px; }
.project .big { width: 26px; }
.intro { width: 200px; }
.grid3 { display: grid; grid-template-columns: 24px 26px 27px; grid-template-rows: 20px 23px; border-right: 1px solid #ddd; align-items: center; }
.grid3 .start { justify-content: flex-start; padding-left: 3px; }
.grid3 svg, .grid9 svg { width: 16px; height: 16px; }
.w40 { width: 42px; }
.w36 { width: 34px; }
.stack { display: grid; grid-template-rows: 15px 15px 15px; margin: -3px 0 0 1px; padding-top: 1px; }
.stack button { justify-content: flex-start; gap: 1px; }
.edit { width: 206px; }
.grid9 { display: grid; grid-template-columns: repeat(9, 1fr); grid-template-rows: 20px 23px; width: 204px; }
.warn { width: 40px; }
.dims { width: 96px; }
.analysis { width: 47px; }
.center { width: 54px; margin-left: auto; border: 0; border-left: 1px solid #d5d5d5; }
.center .big { min-width: 24px; }

.work { flex: 1; display: flex; min-height: 0; background: #efefef; }
.side-panel { width: 169px; display: flex; flex-direction: column; }
.bar { height: 13px; flex: none; background: #d5d5d5; display: flex; align-items: center; padding: 0 2px 0 1px; }
.bar span { margin-left: auto; display: flex; gap: 4px; color: #222; }
.bar svg, .tree svg { width: 8px; height: 8px; }
.viewtools { display: flex; height: 17px; flex: none; align-items: center; gap: 6px; padding-left: 2px; }
.viewtools svg { width: 12px; height: 13px; }
.treebox { flex: 1; background: #fff; min-height: 150px; }
.tree { list-style: none; height: 150px; display: grid; grid-auto-rows: 1fr; }
.tree li { padding-left: 27px; display: flex; align-items: center; }
.tree .branch { padding-left: 4px; gap: 4px; text-shadow: 0 0 #222; }
.tree .sel, tr.sel { background: #cde8fc; }
.grip { height: 6px; flex: none; display: flex; justify-content: center; align-items: center; }
.grip::after { content: ""; width: 9px; border-top: 1px dotted #aaa; }
table { border-collapse: collapse; width: 100%; }
th { font-weight: inherit; text-align: left; }
th, td { padding: 0; vertical-align: middle; line-height: 9px; }
.own { background: #fff; height: 95px; flex: none; border: solid #ddd; border-width: 0 1px 1px 0; }
.own table { height: 83px; table-layout: fixed; }
.own th { height: 14px; background: #efefef; }
.own th, .own td { border: solid #e6e6e6; border-width: 0 1px 1px 0; text-align: center; }
.own th:first-child, .own td:first-child { width: 59px; text-align: left; padding-left: 4px; }
.own th:nth-child(2) { width: 48px; }
.own .sel td:first-child { background: #bdbdbd; }
.own .alt { background: #f7f7f7; }
input { appearance: none; margin: 0 auto; width: 7px; height: 7px; border: 1px solid #888; background: #fff; display: grid; place-content: center; }
input:checked::after { content: ""; width: 2px; height: 4px; border: solid #111; border-width: 0 1px 1px 0; transform: rotate(42deg); }
.splitter { width: 5px; display: grid; place-content: center; }
.splitter::after { content: ""; height: 9px; border-left: 1px dotted #aaa; }
.viewport { flex: 1; min-width: 0; display: flex; flex-direction: column; }
.band { height: 13px; flex: none; background: #d5d5d5; margin-left: -5px; }
.viewbar { height: 14px; flex: none; display: flex; justify-content: flex-end; align-items: center; }
.viewbar button { width: 14px; }
.viewbar .sep { margin: 0; }
.canvas { flex: 1; min-height: 0; background: #fff; overflow: hidden; }
.canvas svg { width: 100%; height: 100%; }
.status { height: 10px; flex: none; background: #efefef; padding: 0 2px; }

.dialog { position: absolute; border: 3px solid #5e1414; border-top: 0; background: #f0f0f0; display: flex; flex-direction: column; box-shadow: 0 0 3px #0004; }
.dialog header { height: 18px; display: flex; background: #5e1414; color: #fff; }
.dialog header h2 { flex: 1; text-align: center; align-self: center; }
.dialog header button { width: 27px; }
.dialog footer { margin-top: auto; height: 23px; background: #e6e6e6; border-top: 1px solid #ddd; display: flex; justify-content: space-between; align-items: center; padding: 0 3px; }
.btn { width: 34px; height: 14px; border: 1px solid #bbb; background: #e2e2e2; }
.btn.primary { width: 40px; border-color: #2680c8; box-shadow: inset 0 0 0 1px #77aedb; }
.materials { left: 79px; top: 90px; width: 217px; height: 164px; }
.library { left: 239px; top: 183px; width: 193px; height: 144px; }
.import { left: 357px; top: 264px; width: 189px; height: 160px; border-color: #b12a22; }
.import header { background: #b12a22; }
.matbody { display: flex; padding: 3px 0 0 4px; }
.matgroups { width: 178px; display: flex; flex-direction: column; gap: 5px; }
fieldset { min-width: 0; height: 54px; background: #fff; border: 1px solid #ddd; }
legend { float: left; width: 100%; height: 12px; background: #d9d9d9; padding: 1px 3px; }
.tiles { clear: both; display: flex; gap: 4px; padding: 5px 6px; }
.tiles button { width: 30px; height: 30px; background: #e0e4e8; border: 1px solid #bcc3ca; }
.tiles svg { width: 28px; height: 28px; }
.mattools { margin-left: 5px; flex: 1; border-left: 1px solid #ddd; display: flex; flex-direction: column; align-items: center; gap: 8px; padding-top: 5px; }
.mattools hr { width: 16px; height: 1px; border: 0; background: #ddd; margin: -4px 0 -2px; }
.dbody { padding: 5px 4px 6px; flex: 1; display: flex; flex-direction: column; }
.listtools { display: flex; height: 11px; margin-bottom: 3px; align-items: center; }
.listtools button { width: 13px; }
.listtools .sep { margin: 0 2px; }
.listtools svg { width: 9px; height: 9px; }
.list { flex: 1; border: 1px solid #ddd; background: #f4f4f4; padding: 1px; }
.list.white { background: #fff; }
.list th { background: #efefef; height: 11px; }
.list.white td { height: 12px; }
.list th, .list td { padding-left: 3px; }
.import table { height: 59px; }
.import th, .import td { border: solid #f2ead0; border-width: 0 0 1px; }
.import th { background: #f4f4f4; border: 0; height: 13px; }
.import tbody tr { background: #eadfb2; }
.import tbody .current { background: #d9e2dc; }
.import th:first-child, .import td:first-child { width: 28px; padding: 0; text-align: center; }
.import .current td:first-child { background: #8bb5ba; border: 1px solid #668; }
```
